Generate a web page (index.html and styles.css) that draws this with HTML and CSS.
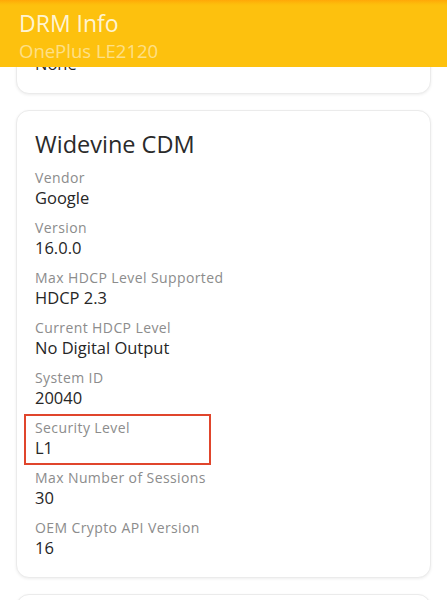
FILE: index.html
```html
<!DOCTYPE html>
<html>
<head>
<meta charset="utf-8">
<link rel="stylesheet" href="styles.css">
</head>
<body>
<header class="appbar">
  <div class="appbar-title">DRM Info</div>
  <div class="appbar-sub">OnePlus LE2120</div>
</header>
<main class="list">
  <section class="card card-partial">
    <div class="value">None</div>
  </section>
  <section class="card">
    <h2 class="card-title">Widevine CDM</h2>
    <div class="row"><div class="label">Vendor</div><div class="value">Google</div></div>
    <div class="row"><div class="label">Version</div><div class="value">16.0.0</div></div>
    <div class="row"><div class="label">Max HDCP Level Supported</div><div class="value">HDCP 2.3</div></div>
    <div class="row"><div class="label">Current HDCP Level</div><div class="value">No Digital Output</div></div>
    <div class="row"><div class="label">System ID</div><div class="value">20040</div></div>
    <div class="row highlighted"><div class="label">Security Level</div><div class="value">L1</div><span class="mark"></span></div>
    <div class="row"><div class="label">Max Number of Sessions</div><div class="value">30</div></div>
    <div class="row"><div class="label">OEM Crypto API Version</div><div class="value">16</div></div>
  </section>
  <section class="card card-next"></section>
</main>
</body>
</html>
```

FILE: styles.css
```css
html, body {
  margin: 0;
  padding: 0;
  background: #ffffff;
  font-family: "Open Sans", "Noto Sans", sans-serif;
  height: 600px;
  overflow: hidden;
}

.appbar {
  position: absolute;
  top: 0;
  left: 0;
  right: 0;
  height: 67px;
  box-sizing: border-box;
  padding: 9px 19px 0;
  background: linear-gradient(to bottom, #ffa808 0, #fdbd0c 4px, #fdc10e 6px, #fdc10e 100%);
  z-index: 2;
}

.appbar-title {
  font-size: 23px;
  line-height: 28px;
  color: rgba(255, 250, 230, 0.93);
}

.appbar-sub {
  margin-top: 1.5px;
  font-size: 18.5px;
  line-height: 24px;
  color: rgba(255, 255, 255, 0.5);
}

.list {
  display: flex;
  flex-direction: column;
  gap: 16px;
  padding: 16px 16px 0;
}

.card {
  background: #fff;
  border: 1px solid #ebebeb;
  border-radius: 13px;
  box-shadow: 0 1px 3px rgba(0, 0, 0, 0.07);
  padding: 17px 18px 18px 18px;
  display: flex;
  flex-direction: column;
  gap: 9px;
}

.card-partial {
  padding-top: 36px;
}

.card-next {
  min-height: 60px;
}

.card-title {
  margin: 0 0 -1px;
  font-weight: 400;
  font-size: 23.5px;
  line-height: 32px;
  color: #2a2a2a;
}

.row {
  position: relative;
  display: flex;
  flex-direction: column;
}

.label {
  font-size: 14px;
  line-height: 19px;
  letter-spacing: 0.4px;
  color: #8c8c8c;
}

.value {
  font-size: 16.5px;
  line-height: 22px;
  color: #262626;
}

.mark {
  position: absolute;
  top: -4px;
  left: -11px;
  width: 187px;
  height: 51px;
  box-sizing: border-box;
  border: 2px solid #e0452c;
}
```
